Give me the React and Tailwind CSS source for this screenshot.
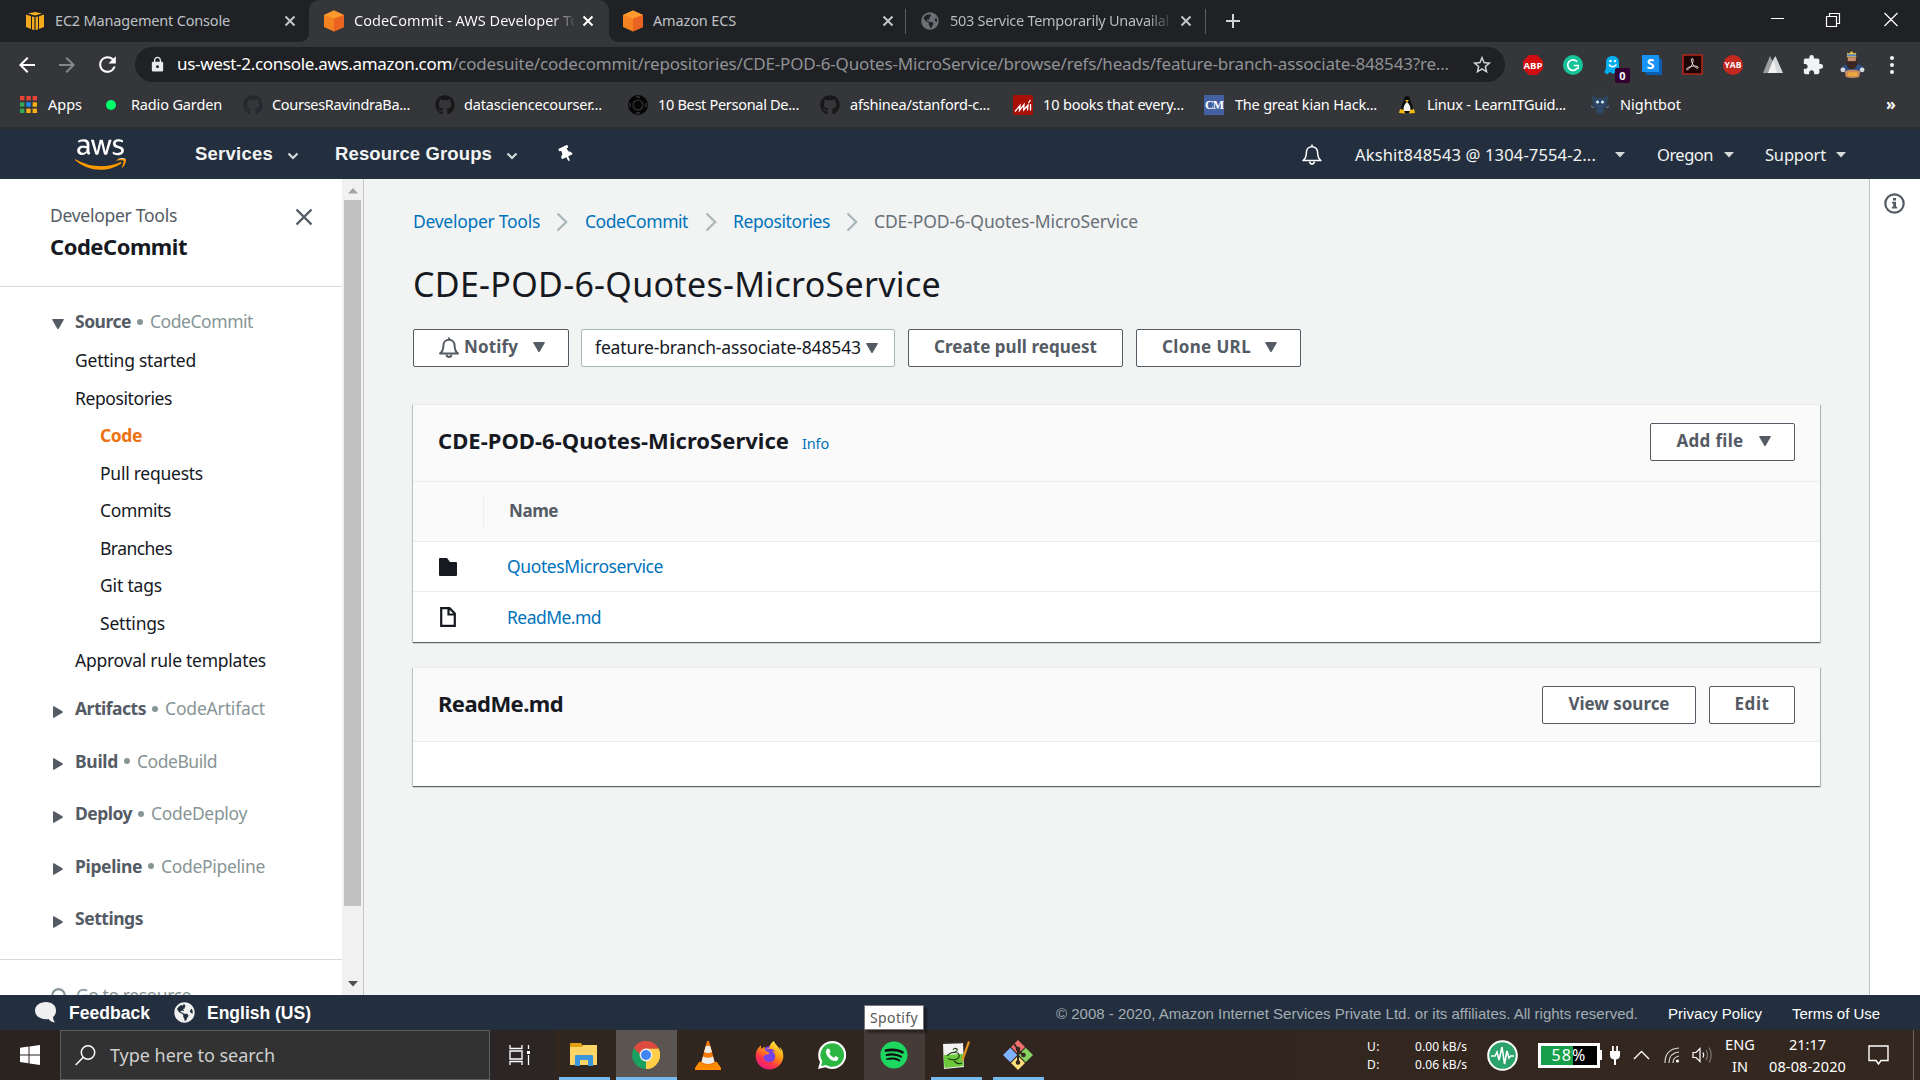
import { useLayoutEffect, useRef } from "react";
import {
  FaAws,
  FaFirefoxBrowser,
  FaGithub,
  FaGlobeAmericas,
  FaSpotify,
  FaThumbtack,
} from "react-icons/fa";
import {
  MdArrowBack,
  MdArrowForward,
  MdExtension,
  MdLock,
  MdRefresh,
  MdStarBorder,
} from "react-icons/md";

/* A single-line label whose tracking is computed to fill the width of its box. */
function Fit({ className = "", children }) {
  const box = useRef(null);
  const text = useRef(null);
  useLayoutEffect(() => {
    const el = text.current;
    el.style.letterSpacing = "0px";
    const natural = el.getBoundingClientRect().width;
    const count = el.textContent.length;
    el.style.letterSpacing = `${(box.current.clientWidth - natural) / count}px`;
  });
  return (
    <span ref={box} className={`block shrink-0 whitespace-nowrap ${className}`}>
      <span ref={text} className="inline-block">
        {children}
      </span>
    </span>
  );
}

/* ---------- small shapes ---------- */

function Down({ className = "" }) {
  return (
    <svg viewBox="0 0 12 10" className={`h-[10px] w-[12px] shrink-0 fill-[#545b64] ${className}`}>
      <path d="M0.6 0H11.4Q12 .3 11.7 1L6.8 9.4Q6 10.4 5.2 9.4L.3 1Q0 .3 .6 0Z" />
    </svg>
  );
}

function Right({ className = "" }) {
  return (
    <svg viewBox="0 0 10 12" className={`h-[12px] w-[10px] shrink-0 fill-[#545b64] ${className}`}>
      <path d="M0 .6Q.3 0 1 .3L9.4 5.2Q10.4 6 9.4 6.8L1 11.7Q.3 12 0 11.4Z" />
    </svg>
  );
}

function Close({ className = "" }) {
  return (
    <svg viewBox="0 0 12 12" className={`h-[12px] w-[12px] shrink-0 fill-none ${className}`}>
      <path d="M1.5 1.5L10.5 10.5M10.5 1.5L1.5 10.5" strokeWidth="2" />
    </svg>
  );
}

function Cube({ className = "" }) {
  return (
    <svg viewBox="0 0 22 22" className={`h-[22px] w-[22px] shrink-0 ${className}`}>
      <path d="M11 .5L21 5V17L11 21.500L1 17V5Z" fill="#f58220" />
      <path d="M11 .5L21 5L11 8.500L1 5Z" fill="#ff9a2e" />
      <path d="M11 8.500L21 5V17L11 21.500Z" fill="#ea6320" />
    </svg>
  );
}

function Bell({ className = "", w = 1.5 }) {
  return (
    <svg viewBox="0 0 20 21" className={`h-[21px] w-[20px] shrink-0 fill-none ${className}`}>
      <path
        d="M1 16.500H19Q15.600 14 15.600 8.500C15.600 5 13.200 2.800 10 2.800C6.800 2.800 4.400 5 4.400 8.500Q4.400 14 1 16.500Z"
        strokeWidth={w}
        strokeLinejoin="round"
      />
      <path d="M10 .5V3M7.500 17.500Q8 20 10 20Q12 20 12.500 17.500" strokeWidth={w} />
    </svg>
  );
}

/* ---------- browser chrome ---------- */

function TabStrip() {
  return (
    <div className="flex h-[42px] items-center bg-[#202124] text-[14.5px] text-[#bdc1c6]">
      <svg viewBox="0 0 18 18" className="ml-[26px] h-[18px] w-[18px] shrink-0">
        <path d="M9 0L16 1.500L9 3.500L2 1.500Z" fill="#f6b221" />
        <path d="M0 2.500L5 4.200V17L0 15ZM6 4.400L8.400 5V18L6 17.400ZM9.600 5L12 4.400V17.400L9.600 18ZM13 4.200L18 2.500V15L13 17Z" fill="#f0aa1c" />
      </svg>
      <Fit className="ml-[11px] w-[175px] pb-px">EC2 Management Console</Fit>
      <Close className="mr-[13px] ml-[54px] stroke-[#c4c6c9]" />

      <div className="relative flex h-[42px] w-[300px] shrink-0 items-center rounded-t-[10px] bg-[#35363a] text-white">
        <span className="absolute bottom-0 left-[-10px] h-[10px] w-[10px] bg-[radial-gradient(circle_at_0_0,#202124_10px,#35363a_10.5px)]" />
        <span className="absolute right-[-10px] bottom-0 h-[10px] w-[10px] bg-[radial-gradient(circle_at_100%_0,#202124_10px,#35363a_10.5px)]" />
        <Cube className="ml-[14px]" />
        <div className="ml-[9px] w-[220px] overflow-hidden bg-linear-to-r from-white from-90% to-[#4a4b4f] bg-clip-text pb-px text-transparent">
          <Fit className="w-[225px]">CodeCommit - AWS Developer To</Fit>
        </div>
        <Close className="ml-[8px] stroke-white" />
      </div>

      <Cube className="ml-[13px]" />
      <Fit className="ml-[9px] w-[83px] pb-px">Amazon ECS</Fit>
      <Close className="ml-[146px] stroke-[#c4c6c9]" />
      <span className="ml-[11px] h-[25px] w-px bg-[#5a5c60]" />
      <FaGlobeAmericas className="ml-[15px] h-[18px] w-[18px] shrink-0 text-[#6c6f74]" />
      <div className="ml-[11px] w-[219px] overflow-hidden bg-linear-to-r from-[#bdc1c6] from-90% to-[#3a3b3f] bg-clip-text pb-px text-transparent">
        <Fit className="w-[219px]">503 Service Temporarily Unavailal</Fit>
      </div>
      <Close className="ml-[11px] stroke-[#c4c6c9]" />
      <span className="ml-[13px] h-[25px] w-px bg-[#5a5c60]" />
      <svg viewBox="0 0 16 16" className="ml-[19px] h-[16px] w-[16px] fill-none stroke-[#d0d2d5]">
        <path d="M8 1V15M1 8H15" strokeWidth="2" />
      </svg>
      <svg viewBox="0 0 128 16" className="mb-[4px] ml-[529px] h-[16px] w-[128px] fill-none stroke-white">
        <path d="M1 7.500H14M56.500 5.500H66.500V15.500H56.500ZM59.500 5V2.500H69.500V12.500H67M114.500 2L127.500 15M127.500 2L114.500 15" strokeWidth="1.200" />
      </svg>
    </div>
  );
}

function Extensions() {
  return (
    <>
      <svg viewBox="0 0 20 20" className="ml-[18px] h-[20px] w-[20px] shrink-0">
        <path d="M6 0H14L20 6V14L14 20H6L0 14V6Z" fill="#d40d12" />
        <text x="10" y="13.700" textAnchor="middle" fontSize="9.500" fontWeight="700" fill="#fff" fontFamily="Open Sans, sans-serif">ABP</text>
      </svg>
      <svg viewBox="0 0 20 20" className="ml-[20px] h-[20px] w-[20px] shrink-0">
        <circle cx="10" cy="10" r="10" fill="#15c39a" />
        <path d="M14.200 6.800A5.300 5.300 0 1 0 14.500 13" fill="none" stroke="#fff" strokeWidth="1.700" />
        <path d="M10.800 10.500H15.200V14" fill="none" stroke="#fff" strokeWidth="1.500" />
      </svg>
      <div className="relative ml-[21px] h-[20px] w-[17px] shrink-0">
        <svg viewBox="0 0 17 20" className="h-[20px] w-[17px]">
          <path d="M2 8C2 3 4.500 1 8.500 1S15 3 15 8V19L12 17L9 19L6 17L3 19.500L0 17Q2 15 2 12Z" fill="#00aef0" />
          <circle cx="6.500" cy="6" r="1.300" fill="#fff" />
          <circle cx="11" cy="6" r="1.300" fill="#fff" />
          <path d="M5 9.500Q8.700 14 12.500 9.500" fill="none" stroke="#fff" strokeWidth="1.500" />
        </svg>
        <span className="absolute top-[13px] left-[11px] flex h-[15px] w-[15px] items-center justify-center rounded-[2px] bg-[#330033] font-['Open_Sans',sans-serif] text-[11px] leading-none font-bold text-white">
          0
        </span>
      </div>
      <svg viewBox="0 0 20 20" className="ml-[21px] h-[20px] w-[20px] shrink-0">
        <path d="M3 17L17 3L20 4V20H5Z" fill="#0b5fae" />
        <path d="M0 0H17V17H0Z" fill="#1793f5" />
        <text x="8.500" y="13.500" textAnchor="middle" fontSize="14" fontWeight="700" fill="#fff" fontFamily="Open Sans, sans-serif">S</text>
      </svg>
      <svg viewBox="0 0 21 21" className="ml-[20px] h-[21px] w-[21px] shrink-0">
        <path d="M1 1H20V20H1Z" fill="#1d0404" stroke="#b3261a" strokeWidth="1.600" />
        <path d="M10 4.500C12 4 11 9 9.500 11.500S5 17 4.500 15.500S9 12 12 12S17 13 16 14S12 12.500 10.500 9.500S9 5 10 4.500Z" fill="none" stroke="#e8e0e0" strokeWidth="1" />
      </svg>
      <svg viewBox="0 0 20 20" className="ml-[20px] h-[20px] w-[20px] shrink-0">
        <circle cx="10" cy="10" r="10" fill="#c4281f" />
        <text x="10" y="13.100" textAnchor="middle" fontSize="8.500" fontWeight="700" fill="#fff" fontFamily="Open Sans, sans-serif">YAB</text>
      </svg>
      <svg viewBox="0 0 20 17" className="ml-[20px] h-[17px] w-[20px] shrink-0">
        <path d="M0 17L7 0L10 6L5 17Z" fill="#9c9ea1" />
        <path d="M5 17L10.500 3L12.500 0L20 17Z" fill="#d6d7d9" />
        <path d="M5 17L10.500 4L14 17Z" fill="#f2f2f2" />
      </svg>
      <MdExtension className="ml-[19px] h-[22px] w-[22px] shrink-0 text-[#f1f3f4]" />
      <svg viewBox="0 0 26 28" className="ml-[16px] h-[27px] w-[25px] shrink-0">
        <path d="M1 18Q3 14 8 14H18Q23 14 25 18L21 23H5Z" fill="#2f4f86" />
        <path d="M5 21Q13 18 21 21L20 27Q13 29 6 27Z" fill="#c98a5c" />
        <path d="M8 22H18V26H8Z" fill="#e8a93c" />
        <path d="M7 6H17L18 13Q17 19 12 19Q8 19 7 14Z" fill="#3a2622" />
        <path d="M8 6.500H16.500V10.500H8Z" fill="#c98e6d" />
        <path d="M7.500 1.500L9.500 2.500L12 0L14.500 2.500L16.500 1.500L17 6.500H7Z" fill="#e9bd4a" />
        <path d="M7.500 3.500H16.500V5.500H7.500Z" fill="#4c86cf" />
        <circle cx="3" cy="19.500" r="2.500" fill="#d9dbe2" />
        <circle cx="23" cy="19.500" r="2.500" fill="#d9dbe2" />
      </svg>
      <svg viewBox="0 0 4 18" className="ml-[25px] h-[18px] w-[4px] shrink-0 fill-[#f1f3f4]">
        <circle cx="2" cy="2" r="2" />
        <circle cx="2" cy="9" r="2" />
        <circle cx="2" cy="16" r="2" />
      </svg>
    </>
  );
}

function Toolbar() {
  return (
    <div className="flex h-[45px] items-center bg-[#35363a]">
      <MdArrowBack className="ml-[15px] h-[24px] w-[24px] shrink-0 text-white" />
      <MdArrowForward className="ml-[16px] h-[24px] w-[24px] shrink-0 text-[#85878a]" />
      <MdRefresh className="ml-[16px] h-[25px] w-[25px] shrink-0 text-white" />
      <div className="ml-[15px] flex h-[35px] w-[1370px] shrink-0 items-center rounded-full bg-[#202124] text-[17px]">
        <MdLock className="ml-[14px] h-[17px] w-[17px] shrink-0 text-[#e8eaed]" />
        <Fit className="ml-[11px] w-[275px] pb-px text-white">us-west-2.console.aws.amazon.com</Fit>
        <Fit className="w-[997px] pb-px text-[#8f9296]">
          /codesuite/codecommit/repositories/CDE-POD-6-Quotes-MicroService/browse/refs/heads/feature-branch-associate-848543?re...
        </Fit>
        <MdStarBorder className="ml-[22px] h-[22px] w-[22px] shrink-0 text-[#d5d7da]" />
      </div>
      <Extensions />
    </div>
  );
}

function BookmarksBar() {
  const rows = ["#ea4335", "#ea4335", "#ea4335", "#34a853", "#1f8af2", "#fbaf18", "#34a853", "#fbaf18", "#fbaf18"];
  return (
    <div className="flex h-[40px] items-center bg-[#35363a] pb-[5px] text-[14.5px] text-white">
      <svg viewBox="0 0 17 17" className="ml-[20px] h-[17px] w-[17px] shrink-0">
        {rows.map((c, i) => (
          <rect key={i} x={(i % 3) * 6.3} y={Math.floor(i / 3) * 6.3} width="4.400" height="4.400" fill={c} />
        ))}
      </svg>
      <Fit className="ml-[11px] w-[34px]">Apps</Fit>
      <span className="ml-[24px] h-[10px] w-[10px] shrink-0 rounded-full bg-[#00ff6a]" />
      <Fit className="ml-[15px] w-[91px]">Radio Garden</Fit>
      <FaGithub className="ml-[21px] h-[20px] w-[20px] shrink-0 text-[#24292e]" />
      <Fit className="ml-[9px] w-[138px]">CoursesRavindraBa...</Fit>
      <FaGithub className="ml-[25px] h-[20px] w-[20px] shrink-0 text-[#191717]" />
      <Fit className="ml-[9px] w-[138px]">datasciencecourser...</Fit>
      <svg viewBox="0 0 20 20" className="ml-[26px] h-[20px] w-[20px] shrink-0">
        <circle cx="10" cy="10" r="10" fill="#060606" />
        <circle cx="10" cy="10" r="5" fill="none" stroke="#35363a" strokeWidth="1.200" />
        <path d="M8 2H12M8 18H12M2 8V12M18 8V12" stroke="#35363a" strokeWidth="1.300" />
      </svg>
      <Fit className="ml-[10px] w-[141px]">10 Best Personal De...</Fit>
      <FaGithub className="ml-[21px] h-[20px] w-[20px] shrink-0 text-[#191717]" />
      <Fit className="ml-[10px] w-[140px]">afshinea/stanford-c...</Fit>
      <svg viewBox="0 0 20 20" className="ml-[23px] h-[20px] w-[20px] shrink-0">
        <rect width="20" height="20" rx="1.500" fill="#a80f07" />
        <path d="M2 16.500L7 10.500L6.500 15.500L11 9.500L10.800 15L15 10L14.500 15.500M15.500 8L17.500 5M17.500 15.500V9" fill="none" stroke="#fff" strokeWidth="1.300" />
      </svg>
      <Fit className="ml-[10px] w-[141px]">10 books that every...</Fit>
      <span className="ml-[20px] flex h-[20px] w-[20px] shrink-0 items-center justify-center bg-[#4560a0] font-['Liberation_Serif',serif] text-[12px] leading-none font-bold tracking-[-1px] text-white">
        CM
      </span>
      <Fit className="ml-[11px] w-[142px]">The great kian Hack...</Fit>
      <svg viewBox="0 0 16 18" className="ml-[22px] h-[18px] w-[16px] shrink-0">
        <path d="M8 0Q11 0 11 4Q14 9 14 14L12 17H4L2 14Q2 9 5 4Q5 0 8 0Z" fill="#0c0c0c" />
        <path d="M8 6Q12 9 11.500 15H4.500Q4 9 8 6Z" fill="#f4f4f4" />
        <path d="M6 4H10L8 6.500ZM1 13L5 14L6 17.500L0 17ZM15 13L11 14L10 17.500L16 17Z" fill="#f5b90e" />
      </svg>
      <Fit className="ml-[12px] w-[139px]">Linux - LearnITGuid...</Fit>
      <svg viewBox="0 0 18 20" className="ml-[25px] h-[20px] w-[18px] shrink-0">
        <path d="M1 0L5 3H13L17 0L16 9Q15 13 12 13L13 17L10 19L9 17L8 19L5 17L6 13Q3 13 2 9Z" fill="#2d4766" />
        <circle cx="6.500" cy="7" r="1.500" fill="#dfe9f5" />
        <circle cx="11.500" cy="7" r="1.500" fill="#dfe9f5" />
        <path d="M0 11L3 13M18 11L15 13" stroke="#4a6f9b" strokeWidth="1.500" />
      </svg>
      <Fit className="ml-[11px] w-[61px]">Nightbot</Fit>
      <Fit className="ml-[205px] w-[10px] pb-[2px] text-[16px] font-bold">»</Fit>
    </div>
  );
}

/* ---------- console header ---------- */

function NavChevron({ className = "" }) {
  return (
    <svg viewBox="0 0 12 8" className={`mt-[3px] h-[8px] w-[12px] shrink-0 fill-none stroke-[#d5dbdb] ${className}`}>
      <path d="M1.500 1.500L6 6L10.500 1.500" strokeWidth="2.200" />
    </svg>
  );
}

function NavCaret({ className = "" }) {
  return (
    <svg viewBox="0 0 10 6" className={`h-[6px] w-[10px] shrink-0 fill-[#d5dbdb] ${className}`}>
      <path d="M0 0H10L5 5.500Z" />
    </svg>
  );
}

function ConsoleNav() {
  return (
    <div className="flex h-[52px] items-center border-t-2 border-[#2a2c2f] bg-[#232f3e] text-[#f2f3f3]">
      <svg className="h-0 w-0 shrink-0">
        <defs>
          <linearGradient id="aws" gradientUnits="userSpaceOnUse" x1="0" y1="0" x2="0" y2="512">
            <stop offset="0.600" stopColor="#fff" />
            <stop offset="0.600" stopColor="#ff9900" />
          </linearGradient>
        </defs>
      </svg>
      <FaAws className="ml-[75px] h-[41px] w-[51px] shrink-0 [&_path]:fill-[url(#aws)]" />
      <Fit className="ml-[69px] w-[78px] font-['Liberation_Sans',sans-serif] text-[18.5px] font-bold">Services</Fit>
      <NavChevron className="ml-[14px]" />
      <Fit className="ml-[36px] w-[157px] font-['Liberation_Sans',sans-serif] text-[18.5px] font-bold">Resource Groups</Fit>
      <NavChevron className="ml-[14px]" />
      <FaThumbtack className="ml-[40px] h-[16px] w-[16px] shrink-0 rotate-[-25deg] text-white" />
      <Bell className="ml-[728px] stroke-white" />
      <div className="flex items-center pt-[2px] text-[16.5px]">
        <Fit className="ml-[33px] w-[241px]">Akshit848543 @ 1304-7554-2...</Fit>
        <NavCaret className="ml-[19px]" />
        <Fit className="ml-[32px] w-[56px]">Oregon</Fit>
        <NavCaret className="ml-[11px]" />
        <Fit className="ml-[31px] w-[61px]">Support</Fit>
        <NavCaret className="ml-[10px]" />
      </div>
    </div>
  );
}

/* ---------- sidebar ---------- */

const sourceLinks = [
  { label: "Getting started", cls: "ml-[75px] w-[121px]" },
  { label: "Repositories", cls: "ml-[75px] w-[97px]" },
  { label: "Code", cls: "ml-[100px] w-[42px] font-bold text-[#ec7211]" },
  { label: "Pull requests", cls: "ml-[100px] w-[103px]" },
  { label: "Commits", cls: "ml-[100px] w-[71px]" },
  { label: "Branches", cls: "ml-[100px] w-[72px]" },
  { label: "Git tags", cls: "ml-[100px] w-[62px]" },
  { label: "Settings", cls: "ml-[100px] w-[65px]" },
  { label: "Approval rule templates", cls: "ml-[75px] w-[191px]" },
];

const sections = [
  { label: "Artifacts", cls: "w-[71px]", sub: "CodeArtifact", subCls: "w-[100px]" },
  { label: "Build", cls: "w-[43px]", sub: "CodeBuild", subCls: "w-[80px]" },
  { label: "Deploy", cls: "w-[57px]", sub: "CodeDeploy", subCls: "w-[96px]" },
  { label: "Pipeline", cls: "w-[67px]", sub: "CodePipeline", subCls: "w-[104px]" },
  { label: "Settings", cls: "w-[68px]" },
];

function SectionLabel({ label, cls, sub, subCls }) {
  return (
    <>
      <Fit className={`font-bold text-[#545b64] ${cls}`}>{label}</Fit>
      {sub && (
        <>
          <span className="mt-px mr-[7px] ml-[6px] h-[6px] w-[6px] shrink-0 rounded-full bg-[#879596]" />
          <Fit className={`text-[#879596] ${subCls}`}>{sub}</Fit>
        </>
      )}
    </>
  );
}

function Sidebar() {
  return (
    <aside className="flex h-[816px] w-[364px] shrink-0 border-r border-[#c3c7c8] bg-white text-[17.5px] leading-[24px] text-[#16191f]">
      <div className="w-[342px] overflow-hidden">
        <div className="flex h-[108px] items-start justify-between border-b border-[#d5dbdb] pr-[29px] pl-[50px]">
          <div className="pt-[24px]">
            <Fit className="w-[127px] text-[#545b64]">Developer Tools</Fit>
            <Fit className="mt-[5px] w-[137px] text-[22px] leading-[28px] font-bold">CodeCommit</Fit>
          </div>
          <svg viewBox="0 0 18 18" className="mt-[29px] h-[18px] w-[18px] fill-none stroke-[#545b64]">
            <path d="M1.500 1.500L16.500 16.500M16.500 1.500L1.500 16.500" strokeWidth="2.400" />
          </svg>
        </div>
        <div className="flex h-[54.5px] items-center pt-[14px]">
          <div className="flex h-[40px] items-center">
            <Down className="mt-[6px] mr-[11px] ml-[52px]" />
            <SectionLabel label="Source" cls="w-[56px]" sub="CodeCommit" subCls="w-[103px]" />
          </div>
        </div>
        {sourceLinks.map((l) => (
          <div key={l.label} className="flex h-[37.5px] items-center">
            <Fit className={l.cls}>{l.label}</Fit>
          </div>
        ))}
        <div className="pt-[3px] pb-[14px]">
          {sections.map((s) => (
            <div key={s.label} className="flex h-[52.5px] items-center">
              <Right className="mt-[7px] mr-[12px] ml-[53px]" />
              <SectionLabel {...s} />
            </div>
          ))}
        </div>
        <div className="flex border-t border-[#d5dbdb] pt-[23px] text-[#879596]">
          <svg viewBox="0 0 18 18" className="mt-[5px] ml-[51px] h-[18px] w-[18px] shrink-0 fill-none stroke-[#879596]">
            <circle cx="7.500" cy="7.500" r="6.300" strokeWidth="2.200" />
            <path d="M12 12L17 17" strokeWidth="2.200" />
          </svg>
          <Fit className="ml-[7px] w-[115px]">Go to resource</Fit>
        </div>
      </div>
      <div className="flex w-[21px] flex-col items-center bg-[#f1f1f1]">
        <svg viewBox="0 0 10 6" className="mt-[9px] mb-[6px] h-[6px] w-[10px] shrink-0 fill-[#a3a3a3]">
          <path d="M5 0L10 5.500H0Z" />
        </svg>
        <span className="h-[706px] w-[17px] shrink-0 bg-[#c1c1c1]" />
        <svg viewBox="0 0 10 6" className="mt-[75px] h-[6px] w-[10px] shrink-0 fill-[#505050]">
          <path d="M0 0H10L5 5.500Z" />
        </svg>
      </div>
    </aside>
  );
}

/* ---------- main content ---------- */

function Button({ className = "", children }) {
  return (
    <button
      className={`flex h-[38px] shrink-0 items-center justify-center rounded-[2px] border border-[#545b64] bg-white pb-[2px] text-[17px] leading-[24px] font-bold text-[#545b64] ${className}`}
    >
      {children}
    </button>
  );
}

function Crumb({ className = "" }) {
  return (
    <svg viewBox="0 0 12 20" className={`mt-px h-[20px] w-[12px] shrink-0 fill-none stroke-[#aab7b8] ${className}`}>
      <path d="M1.500 1.500L10.200 10L1.500 18.500" strokeWidth="2.300" />
    </svg>
  );
}

const panel = "bg-white shadow-[0_1px_1px_0_rgba(0,28,36,0.5),1px_1px_1px_0_rgba(0,28,36,0.2),-1px_1px_1px_0_rgba(0,28,36,0.15)] border-t border-[#eaeded]";

function Main() {
  return (
    <main className="h-[816px] grow bg-[#f2f3f3] pt-[29px] pr-[49px] pl-[49px] text-[17.5px] leading-[26px]">
      <nav className="flex h-[26px] items-center text-[#0073bb]">
        <Fit className="w-[127px]">Developer Tools</Fit>
        <Crumb className="ml-[16px]" />
        <Fit className="ml-[17px] w-[103px]">CodeCommit</Fit>
        <Crumb className="ml-[17px]" />
        <Fit className="ml-[16px] w-[97px]">Repositories</Fit>
        <Crumb className="ml-[16px]" />
        <Fit className="ml-[16px] w-[264px] text-[#687078]">CDE-POD-6-Quotes-MicroService</Fit>
      </nav>
      <Fit className="mt-[27px] w-[528px] text-[34px] leading-[46px] text-[#16191f]">CDE-POD-6-Quotes-MicroService</Fit>
      <div className="mt-[22px] flex">
        <Button className="w-[156px] pl-[2px]">
          <Bell className="stroke-[#545b64]" w={2} />
          <Fit className="ml-[5px] w-[54px]">Notify</Fit>
          <Down className="ml-[15px]" />
        </Button>
        <div className="ml-[12px] flex h-[38px] w-[314px] items-center rounded-[2px] border border-[#aab7b8] bg-white pb-[3px] pl-[13px] text-[#16191f]">
          <Fit className="w-[266px]">feature-branch-associate-848543</Fit>
          <Down className="mt-[2px] ml-[5px]" />
        </div>
        <Button className="ml-[13px] w-[215px]">
          <Fit className="w-[163px]">Create pull request</Fit>
        </Button>
        <Button className="ml-[13px] w-[165px] pl-[2px]">
          <Fit className="w-[89px]">Clone URL</Fit>
          <Down className="ml-[14px]" />
        </Button>
      </div>

      <section className={`mt-[37px] ${panel}`}>
        <header className="flex h-[77px] items-center border-b border-[#eaeded] bg-[#fafafa] pr-[25px] pl-[25px]">
          <Fit className="w-[351px] pb-[7px] text-[22px] font-bold text-[#16191f]">CDE-POD-6-Quotes-MicroService</Fit>
          <Fit className="ml-[13px] w-[27px] pb-px text-[14.5px] text-[#0073bb]">Info</Fit>
          <Button className="mr-0 mb-[3px] ml-auto w-[145px] pl-[2px]">
            <Fit className="w-[67px]">Add file</Fit>
            <Down className="ml-[15px]" />
          </Button>
        </header>
        <div className="flex h-[60px] items-center border-b border-[#eaeded] bg-[#fafafa]">
          <span className="ml-[70px] h-[29px] w-px bg-[#eaeded]" />
          <Fit className="ml-[25px] w-[49px] pb-px text-[17px] font-bold text-[#545b64]">Name</Fit>
        </div>
        <div className="flex h-[50px] items-center border-b border-[#eaeded]">
          <svg viewBox="0 0 18 18" className="ml-[26px] h-[18px] w-[18px] fill-[#16191f]">
            <path d="M1 0H8L11 4H17Q18 4 18 5V17Q18 18 17 18H1Q0 18 0 17V1Q0 0 1 0Z" />
          </svg>
          <Fit className="ml-[50px] w-[156px] pb-px text-[#0073bb]">QuotesMicroservice</Fit>
        </div>
        <div className="flex h-[50px] items-center">
          <svg viewBox="0 0 16 20" className="ml-[27px] h-[20px] w-[16px] fill-none stroke-[#16191f]">
            <path d="M1.200 1.200H9.500L14.800 6.500V18.800H1.200ZM8.500 1.500V7.500H14.500" strokeWidth="2.200" />
          </svg>
          <Fit className="ml-[51px] w-[94px] pb-px text-[#0073bb]">ReadMe.md</Fit>
        </div>
      </section>

      <section className={`mt-[25px] ${panel}`}>
        <header className="flex h-[74px] items-center border-b border-[#eaeded] bg-[#fafafa] pr-[25px] pl-[25px]">
          <Fit className="w-[125px] pb-[4px] text-[22px] font-bold text-[#16191f]">ReadMe.md</Fit>
          <Button className="ml-auto w-[154px]">
            <Fit className="w-[101px]">View source</Fit>
          </Button>
          <Button className="ml-[13px] w-[86px]">
            <Fit className="w-[35px]">Edit</Fit>
          </Button>
        </header>
        <div className="h-[44px]" />
      </section>
    </main>
  );
}

function HelpPanel() {
  return (
    <aside className="h-[816px] w-[51px] shrink-0 border-l border-[#c3c7c8] bg-white pt-[14px] pl-[14px]">
      <svg viewBox="0 0 21 21" className="h-[21px] w-[21px]">
        <circle cx="10.500" cy="10.500" r="9.200" fill="none" stroke="#545b64" strokeWidth="2.200" />
        <path d="M9 5H12V7.500H9ZM8 8.800H12V13.800H13.200V15.500H7.800V13.800H9.200V10.500H8Z" fill="#545b64" />
      </svg>
    </aside>
  );
}

function ConsoleFooter() {
  return (
    <footer className="flex h-[35px] items-center bg-[#232f3e] font-['Liberation_Sans',sans-serif] text-white">
      <svg viewBox="0 0 22 21" className="ml-[35px] h-[21px] w-[22px] shrink-0 fill-[#f0f0f0]">
        <path d="M11 0C17 0 21 3.500 21 8.500Q21 12.500 18 15Q18 18 20 20.500Q15.500 20 13.500 17C6 18 0 14.500 0 8.500C0 3.500 5 0 11 0Z" />
      </svg>
      <Fit className="ml-[12px] w-[81px] pt-[2px] text-[17.5px] font-bold">Feedback</Fit>
      <FaGlobeAmericas className="ml-[24px] h-[21px] w-[21px] shrink-0 text-[#f0f0f0]" />
      <Fit className="ml-[12px] w-[104px] pt-[2px] text-[17.5px] font-bold">English (US)</Fit>
      <Fit className="ml-[745px] w-[582px] pt-[3px] text-[15px] text-[#a3adb3]">
        © 2008 - 2020, Amazon Internet Services Private Ltd. or its affiliates. All rights reserved.
      </Fit>
      <Fit className="ml-[30px] w-[94px] pt-[3px] text-[15px]">Privacy Policy</Fit>
      <Fit className="ml-[30px] w-[88px] pt-[3px] text-[15px]">Terms of Use</Fit>
    </footer>
  );
}

/* ---------- desktop taskbar ---------- */

function Tile({ className = "", bar = "", children }) {
  return (
    <div className={`relative flex h-[50px] w-[61px] shrink-0 items-center justify-center ${className}`}>
      {children}
      {bar && <span className={`absolute bottom-0 h-[3px] bg-[#76b9ed] ${bar}`} />}
    </div>
  );
}

function TaskIcons() {
  return (
    <>
      <Tile bar="w-[51px]">
        <svg viewBox="0 0 28 24" className="mr-[1px] h-[24px] w-[28px]">
          <path d="M0 1Q0 0 1 0H11L13 3V5H0Z" fill="#e0a010" />
          <path d="M0 4H12L13 2H27V22H0Z" fill="#fdd466" />
          <path d="M5 13Q5 12 6 12H22Q23 12 23 13V23H18V17H10V23H5Z" fill="#3a96dd" />
        </svg>
      </Tile>
      <Tile className="ml-[1px] bg-[#5b5552]" bar="w-[61px]">
        <svg viewBox="0 0 28 28" className="mr-[1px] h-[28px] w-[28px]">
          <path d="M14 14L1.900 7A14 14 0 0 1 26.100 7Z" fill="#dd4b3e" />
          <path d="M14 14L26.100 7A14 14 0 0 1 13 28Z" fill="#ffcd46" />
          <path d="M14 14L14 28A14 14 0 0 1 1.900 7Z" fill="#1aa15f" />
          <path d="M14 7.600H26.400A14 14 0 0 1 13.800 28L19.500 17.200Z" fill="#ffcd46" />
          <path d="M14 7.600L7.500 13L1.900 7A14 14 0 0 1 26.400 7.600Z" fill="#dd4b3e" />
          <circle cx="14" cy="14" r="6.400" fill="#f1f1f1" />
          <circle cx="14" cy="14" r="5" fill="#4285f4" />
        </svg>
      </Tile>
      <Tile>
        <svg viewBox="0 0 26 29" className="h-[29px] w-[26px]">
          <path d="M4 21H22L26 27V29H0V27Z" fill="#ff8a00" />
          <path d="M12 0H14L20 22Q13 27 6 22Z" fill="#f27a0a" />
          <path d="M10.800 5H15.200L17 11Q13 13 9 11ZM8 15.500Q13 18 18 15.500L19.500 21Q13 25 6.500 21Z" fill="#ececec" />
        </svg>
      </Tile>
      <Tile className="ml-[1px]">
        <svg className="absolute h-0 w-0">
          <defs>
            <linearGradient id="fox" x1="0.800" y1="0" x2="0.200" y2="1">
              <stop offset="0" stopColor="#fff44f" />
              <stop offset="0.400" stopColor="#ff980e" />
              <stop offset="0.700" stopColor="#ff3647" />
              <stop offset="1" stopColor="#e31587" />
            </linearGradient>
          </defs>
        </svg>
        <span className="absolute h-[18px] w-[18px] rounded-full bg-[#7542e5]" />
        <FaFirefoxBrowser className="relative h-[29px] w-[29px] [&_path]:fill-[url(#fox)]" />
      </Tile>
      <Tile className="ml-[1px]">
        <svg viewBox="0 0 28 28" className="h-[28px] w-[28px]">
          <path d="M14 0A14 14 0 1 1 7.500 26.300L0 28L2 21A14 14 0 0 1 14 0Z" fill="#fff" />
          <path d="M14 2.200A11.800 11.800 0 1 1 8 24L3 25L4.300 20.400A11.800 11.800 0 0 1 14 2.200Z" fill="#2bb741" />
          <path d="M9.500 7.500L11.500 8L12.500 11L11.300 12.500Q13 15.500 16 16.700L17.500 15L20.300 16.400Q20.500 19.500 17.500 20Q13 20 9.700 15.500Q6 10.500 9.500 7.500Z" fill="#fff" />
        </svg>
      </Tile>
      <Tile className="ml-[2px] bg-[#463c37]">
        <span className="absolute h-[24px] w-[24px] rounded-full bg-[#101010]" />
        <FaSpotify className="relative mr-[1px] h-[28px] w-[28px] text-[#1ed760]" />
      </Tile>
      <Tile className="ml-[1px]" bar="w-[51px]">
        <svg viewBox="0 0 28 28" className="mr-[2px] h-[28px] w-[28px]">
          <path d="M1 3L21 2L22 26L2 28Z" fill="#f3f3f3" />
          <path d="M1.500 14L21 13L21.500 25L2.500 27Z" fill="#6cc93a" />
          <path d="M3 3V1M6 3V1M9 3V1M12 3V1M15 3V1M18 3V1" stroke="#444" strokeWidth="1" />
          <path d="M5 15Q9 10 16 12Q19 16 15 18T6 17.500M11 9Q12 6.500 15 8Q16 10 13 11M12 20Q16 24 20 22" fill="none" stroke="#1d4012" strokeWidth="1.200" />
          <path d="M28 1L22 18L19.500 21L20 17L26 0Z" fill="#e2941f" />
        </svg>
      </Tile>
      <Tile className="ml-[1px]" bar="w-[51px]">
        <svg viewBox="0 0 30 30" className="mr-[1px] h-[30px] w-[30px]">
          <path d="M15 0L22 7L15 14L8 7Z" fill="#f07070" />
          <path d="M7.300 7.700L14.300 15L7.300 22.300L0 15Z" fill="#80b3ff" />
          <path d="M22.700 7.700L30 15L22.700 22.300L15.700 15Z" fill="#87d35f" />
          <path d="M15 16L22 23L15 30L8 23Z" fill="#ffe07d" />
          <path d="M11 4L15 9V23M15 10L20 15" fill="none" stroke="#352a22" strokeWidth="2" />
          <circle cx="15" cy="9" r="2.300" fill="#352a22" />
          <circle cx="20.500" cy="15" r="2.300" fill="#352a22" />
          <circle cx="15" cy="22.500" r="2.300" fill="#352a22" />
        </svg>
      </Tile>
    </>
  );
}

function Tray() {
  return (
    <>
      <div className="ml-[318px] w-[14px] pt-px text-[12px] leading-[17.5px] text-white">
        <Fit className="w-[13px]">U:</Fit>
        <Fit className="w-[13px]">D:</Fit>
      </div>
      <div className="ml-[34px] pt-px text-[12px] leading-[17.5px] text-white">
        <Fit className="w-[52px]">0.00 kB/s</Fit>
        <Fit className="w-[52px]">0.06 kB/s</Fit>
      </div>
      <svg viewBox="0 0 31 31" className="ml-[20px] h-[31px] w-[31px] shrink-0">
        <circle cx="15.500" cy="15.500" r="14.300" fill="#2ca36c" stroke="#fff" strokeWidth="2" />
        <path d="M4 16H8L10 12L12 20L15 7L17.500 24L20 11L22 18L23.500 16H27" fill="none" stroke="#fff" strokeWidth="1.600" />
      </svg>
      <div className="relative ml-[20px] flex h-[25px] w-[62px] shrink-0 items-center justify-center border-[3px] border-white bg-linear-to-r from-[#16a04a] from-58% to-black to-58% text-[16px] leading-none text-white">
        <Fit className="w-[35px]">58%</Fit>
        <span className="absolute right-[-5px] h-[10px] w-[3px] bg-white" />
      </div>
      <svg viewBox="0 0 10 19" className="ml-[10px] h-[19px] w-[10px] shrink-0 fill-white">
        <path d="M2 0H3.800V5H6.200V0H8V5H10V9Q10 13 6 13.500V19H4V13.500Q0 13 0 9V5H2Z" />
      </svg>
      <svg viewBox="0 0 17 10" className="ml-[13px] h-[10px] w-[17px] shrink-0 fill-none stroke-white">
        <path d="M1 9L8.500 1.500L16 9" strokeWidth="1.300" />
      </svg>
      <svg viewBox="0 0 16 16" className="ml-[14px] h-[16px] w-[16px] shrink-0 fill-none stroke-[#d8d5d3]">
        <path d="M1 16Q1 2 15 1M5 16Q5 6 15 5M9 16Q9 10 15 9" strokeWidth="1.200" />
        <circle cx="13.500" cy="14" r="1.600" className="fill-white stroke-none" />
      </svg>
      <svg viewBox="0 0 21 18" className="ml-[12px] h-[18px] w-[21px] shrink-0 fill-none stroke-white">
        <path d="M1 6.500H4L8 2.500V15.500L4 11.500H1Z" strokeWidth="1.200" />
        <path d="M11 6.500Q12.500 9 11 11.500" strokeWidth="1.200" />
        <path d="M14 4Q17 9 14 14M17 1.500Q21.500 9 17 16.500" stroke="#7d7672" strokeWidth="1.200" />
      </svg>
      <div className="ml-[12px] flex flex-col items-center text-[14.5px] leading-[22px] text-white">
        <Fit className="w-[30px]">ENG</Fit>
        <Fit className="w-[16px]">IN</Fit>
      </div>
      <div className="ml-[14px] flex flex-col items-center text-[14.5px] leading-[22px] text-white">
        <Fit className="w-[37px]">21:17</Fit>
        <Fit className="w-[77px]">08-08-2020</Fit>
      </div>
      <svg viewBox="0 0 21 20" className="ml-[22px] h-[20px] w-[21px] shrink-0 fill-none stroke-white">
        <path d="M1 1H20V15.500H13L10.500 19L8 15.500H1Z" strokeWidth="1.400" />
      </svg>
      <span className="ml-[24px] h-[50px] w-px bg-[#6b625e]" />
    </>
  );
}

function Taskbar() {
  return (
    <div className="flex h-[50px] items-center bg-linear-to-r from-[#33281f] via-[#31261f] to-[#34271f]">
      <div className="flex h-[50px] w-[60px] shrink-0 items-center justify-center bg-[#2b2320]">
        <svg viewBox="0 0 20 20" className="h-[20px] w-[20px] fill-white">
          <path d="M0 2.800L8.500 1.600V9.400H0ZM9.500 1.400L20 0V9.400H9.500ZM0 10.400H8.500V18.300L0 17.100ZM9.500 10.400H20V20L9.500 18.500Z" />
        </svg>
      </div>
      <div className="flex h-[50px] w-[430px] shrink-0 items-center border border-[#5e5e5e] bg-[#323232]">
        <svg viewBox="0 0 21 21" className="ml-[14px] h-[21px] w-[21px] shrink-0 fill-none stroke-white">
          <circle cx="13" cy="7.500" r="6.700" strokeWidth="1.500" />
          <path d="M8.300 12.300L.7 20" strokeWidth="1.500" />
        </svg>
        <Fit className="ml-[14px] w-[165px] text-[18px] text-[#cfcfcf]">Type here to search</Fit>
      </div>
      <div className="flex h-[50px] w-[64px] shrink-0 items-center bg-[#2b2625] pl-[19px]">
        <svg viewBox="0 0 22 20" className="h-[20px] w-[22px] fill-none stroke-white">
          <path d="M1 0V3.500H13V0M1 6H13V14H1ZM1 20V16.500H13V20M19.500 0V4M19.500 10V20" strokeWidth="1.300" />
          <path d="M18 6H21V9H18Z" className="fill-white stroke-none" />
        </svg>
      </div>
      <TaskIcons />
      <Tray />
    </div>
  );
}

export default function App() {
  return (
    <div className="relative h-[1080px] w-[1920px] overflow-hidden bg-[#232f3e] font-['Noto_Sans',sans-serif]">
      <TabStrip />
      <Toolbar />
      <BookmarksBar />
      <ConsoleNav />
      <div className="flex h-[816px]">
        <Sidebar />
        <Main />
        <HelpPanel />
      </div>
      <ConsoleFooter />
      <Taskbar />
      <div className="absolute top-[1005px] left-[864px] flex h-[25px] w-[60px] items-center justify-center border border-[#767676] bg-white text-[14px] leading-none text-[#575757] shadow-[3px_3px_2px_rgba(0,0,0,0.4)]">
        <Fit className="w-[48px]">Spotify</Fit>
      </div>
    </div>
  );
}
